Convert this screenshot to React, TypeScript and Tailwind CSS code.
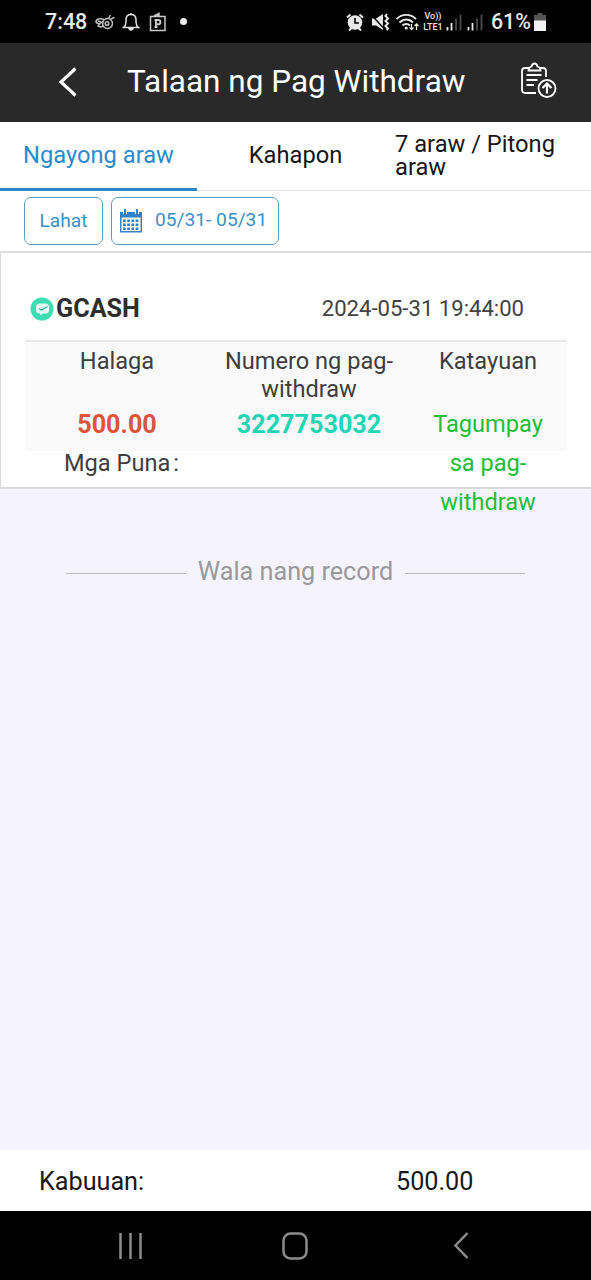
import type { ReactNode } from 'react';

interface LabelProps {
  children: ReactNode;
}

function SignalBars() {
  return (
    <svg className="h-[18px] w-[16px]" viewBox="0 0 16 18">
      <path d="M1.500 14v3.500M5.500 10v7.500" stroke="#e8e8e8" strokeWidth="1.800" />
      <path d="M10 5.500v12M14.500 1.500v16" stroke="#4b4b4b" strokeWidth="1.800" />
    </svg>
  );
}

function StatusBar() {
  return (
    <div className="flex h-[43px] items-center bg-black text-[#e8e8e8]">
      <span className="ml-[45px] w-[42px] whitespace-nowrap text-[21.500px] font-medium leading-none">7:48</span>

      {/* Notifications */}
      <svg className="ml-2 h-5 w-5" viewBox="0 0 20 20" fill="none" stroke="#bdbdbd" strokeWidth="1.500">
        <path d="M9 7.500C5 6 1 7 1 9.500c0 1.500 2 2.500 4 2l-2 2.500c2 1.500 4 1 6-.5" />
        <circle cx="12.500" cy="11.500" r="5" />
        <circle cx="12" cy="11.500" r="1.800" />
        <path d="M3 9l5.500 2M13.500 6.500L15.500 3M15.500 7l4-1.500" />
      </svg>
      <svg className="ml-[7px] h-5 w-[18px]" viewBox="0 0 18 20" fill="none" stroke="#e0e0e0" strokeWidth="1.500">
        <path d="M1.500 15.500h15c-2-1.500-2.500-3-2.500-5.500V7.500c0-3-2-5-5-5s-5 2-5 5V10c0 2.500-.5 4-2.500 5.500zM9 2.500V1" />
        <path d="M7 16.500c.5 2 3.500 2 4 0z" fill="#e0e0e0" />
      </svg>
      <svg className="ml-[9px] h-5 w-[18px]" viewBox="0 0 18 20" fill="none" stroke="#c9c9c9" strokeWidth="1.500">
        <path d="M1.500 4.500h14.500v14H1.500z" />
        <path d="M5 4l5-2.500V4z" fill="#c9c9c9" />
        <path d="M7 15.500V8h2.200c3 0 3 4.300 0 4.300H7M5.500 15h3M5.500 8H7" strokeWidth="1.900" />
      </svg>
      <span className="ml-[13px] h-[7px] w-[7px] rounded-full bg-[#eeeeee]" />

      {/* System state */}
      <svg className="ml-[159px] h-[18px] w-[18px]" viewBox="0 0 18 18">
        <circle cx="9" cy="9.500" r="7.300" fill="#e8e8e8" />
        <path d="M1 4.500L4.500 1.500M17 4.500l-3.500-3M3 17.500L5.500 15M15 17.500L12.500 15" stroke="#e8e8e8" strokeWidth="2" />
        <path d="M9 5v5h4" fill="none" stroke="#000" strokeWidth="1.600" />
      </svg>
      <svg className="ml-[7px] h-[18px] w-[19px]" viewBox="0 0 19 18" fill="#e8e8e8">
        <path d="M1 5.500h4L12 1v16l-7-4.500H1z" />
        <path d="M0 1.500l12 13" stroke="#000" strokeWidth="1.300" />
        <path d="M16 1l-1.500 2 2.500 2.500-2.500 2.500 2.500 2.500-2.500 2.500 2.500 2.500-1.500 1.500" fill="none" stroke="#e8e8e8" strokeWidth="2" />
      </svg>
      <svg className="ml-[6px] h-[18px] w-[23px]" viewBox="0 0 23 18" fill="none" stroke="#e8e8e8" strokeWidth="1.900">
        <path d="M.5 6c5.500-5.500 14-5.500 19.500 0M3.500 9.500c4-4 9.500-4 13.500 0M6.500 12.500c2-2 5.500-2 7.500 0" />
        <circle cx="10.200" cy="15" r="1.600" fill="#e8e8e8" stroke="none" />
        <path d="M15.500 11v5.500M13.500 14.500l2 2 2-2M20.500 17v-6M18.500 13l2-2 2 2" strokeWidth="1.300" />
      </svg>
      <div className="ml-[3px] flex w-[22px] flex-col items-center whitespace-nowrap text-[9px] font-medium leading-[11px]">
        <span>Vo))</span>
        <span>LTE1</span>
      </div>
      <div className="ml-[2px] flex gap-[5px]">
        <SignalBars />
        <SignalBars />
      </div>
      <span className="ml-[8px] w-[40px] whitespace-nowrap text-[21.300px] font-medium leading-none">61%</span>
      <svg className="ml-[3px] h-[18px] w-[12px]" viewBox="0 0 12 18">
        <path d="M3.500 0h5v2H12v6H0V2h3.500z" fill="#555555" />
        <path d="M0 7.500h12V18H0z" fill="#f2f2f2" />
      </svg>
    </div>
  );
}

function Header() {
  return (
    <header className="flex h-[79px] items-center bg-[#292929] text-white">
      <svg className="mb-[2px] ml-[58px] h-[30px] w-5" viewBox="0 0 20 30" fill="none" stroke="currentColor" strokeWidth="3.200">
        <path d="M17.500 1.500L3 15l14.500 13.500" />
      </svg>
      <h1 className="ml-[49px] w-[340px] whitespace-nowrap pb-px text-[31.500px] font-normal leading-none">
        Talaan ng Pag Withdraw
      </h1>
      <svg className="mb-[5px] ml-[53px] h-[36px] w-[37px]" viewBox="0 0 37 36" fill="none" stroke="currentColor" strokeWidth="1.800">
        <path d="M16 31H5a3 3 0 0 1-3-3V9a3 3 0 0 1 3-3h4M20 6h3a3 3 0 0 1 3 3v6" />
        <path d="M8.500 8.500c0-3 1-3.500 3-4 1-4 5-4 6 0 2 .5 3 1 3 4z" />
        <path d="M6.500 13h15M6.500 18h11M6.500 23h7.500" />
        <circle cx="27" cy="26.500" r="8.500" />
        <path d="M27 31.500V22M22.500 26l4.500-4.500 4.500 4.500" strokeWidth="2.200" />
      </svg>
    </header>
  );
}

function Tabs() {
  return (
    <nav className="grid h-[69px] grid-cols-3 border-b border-[#e2e2e2] bg-white text-[23.700px] leading-[23px] text-[#161616]">
      <div className="-mb-px flex items-center justify-center border-b-[3px] border-[#2c85c6] text-[#2c8ace]">
        Ngayong araw
      </div>
      <div className="flex items-center justify-center pb-[2px]">Kahapon</div>
      <div className="flex items-center pb-px pl-px">7 araw / Pitong araw</div>
    </nav>
  );
}

function CalendarIcon() {
  const rows = [10.5, 14.5, 18.5];
  const cols = [3, 7.2, 11.4, 15.6];

  return (
    <svg className="h-6 w-[22px]" viewBox="0 0 22 24">
      <path d="M0 3h22v20.500H0z" fill="#2a84d0" />
      <path d="M1.500 8.500h19V22h-19z" fill="#fff" />
      <path d="M5 0v5M17 0v5" stroke="#fff" strokeWidth="4" />
      <path d="M5 0v5M17 0v5" stroke="#2a84d0" strokeWidth="2" />
      {rows.map((y) =>
        cols.map((x) => <rect key={`${x}-${y}`} x={x} y={y} width="2.800" height="2.500" fill="#2a84d0" />)
      )}
    </svg>
  );
}

function Filters() {
  return (
    <div className="flex h-[62px] gap-2 border-b-2 border-[#dedede] bg-white pl-6 pt-[6px] text-[19.200px] text-[#3b90c6]">
      <button className="h-[48px] w-[79px] rounded-[7px] border border-[#5a9fc0]">Lahat</button>
      <button className="flex h-[48px] w-[168px] items-center whitespace-nowrap rounded-[7px] border border-[#5a9fc0] pl-2">
        <CalendarIcon />
        <span className="ml-[13px] pb-[2px]">05/31- 05/31</span>
      </button>
    </div>
  );
}

function ColumnLabel({ children }: LabelProps) {
  return <div className="h-[56px] text-[#3e3e3e]">{children}</div>;
}

function RecordCard() {
  return (
    <section className="h-[236px] border-b-2 border-l border-[#dadade] bg-white pl-6 pr-6 text-[23.600px]">
      <div className="flex h-[89px] items-center border-b-2 border-[#e9e9e9] pl-[5px] pt-[24px]">
        <svg className="h-6 w-6" viewBox="0 0 24 24">
          <circle cx="12" cy="12" r="11.500" fill="#3edcb3" />
          <path d="M6 10Q6 6.500 9.500 6.500h6Q19 6.500 19 10v3q0 3.500-3.500 3.500H14l-4 1.500v-1.500Q6 16.500 6 13z" fill="#e5fff6" />
          <path d="M9 11.500l2.500 1.500 6-3.500" fill="none" stroke="#28b995" strokeWidth="1.300" />
        </svg>
        <span className="ml-[2px] text-[25.200px] font-bold text-[#2d2d2d]">GCASH</span>
        <time className="ml-auto mr-[43px] text-[22.100px] text-[#424242]">2024-05-31 19:44:00</time>
      </div>

      <div className="grid h-[109px] grid-cols-[184px_200px_158px] bg-[#fafafa] pt-[5px] text-center leading-[28px]">
        <div>
          <ColumnLabel>Halaga</ColumnLabel>
          <strong className="block text-[25.200px] leading-[43px] text-[#e0533a]">500.00</strong>
        </div>
        <div>
          <ColumnLabel>Numero ng pag-withdraw</ColumnLabel>
          <strong className="block text-[25.200px] leading-[43px] text-[#1fd5b3]">3227753032</strong>
        </div>
        <div>
          <ColumnLabel>Katayuan</ColumnLabel>
          <div className="px-5 pt-[2px] leading-[39.200px] text-[#20bd35]">Tagumpay sa pag-withdraw</div>
        </div>
      </div>
      <div className="pl-[39px] leading-[24px] text-[#3e3e3e]">Mga Puna<span className="ml-[3px]">:</span></div>
    </section>
  );
}

function EndOfRecords() {
  return (
    <div className="mt-[67px] flex items-center justify-center text-[25.200px] leading-8 text-[#999999]">
      <span className="mt-[2px] h-px w-[120px] bg-[#bdbdbd]" />
      <span className="mx-3">Wala nang record</span>
      <span className="mt-[2px] h-px w-[120px] bg-[#bdbdbd]" />
    </div>
  );
}

function NavigationBar() {
  return (
    <div className="flex h-[69px] items-center bg-black text-[#8c8c8c]">
      <svg className="ml-[118px] h-[26px] w-[25px]" viewBox="0 0 25 26" stroke="currentColor" strokeWidth="2.500">
        <path d="M2.500 0v26M12.500 0v26M22.500 0v26" />
      </svg>
      <svg className="ml-[139px] h-[28px] w-[26px]" viewBox="0 0 26 28" fill="none" stroke="currentColor" strokeWidth="2.500">
        <rect x="1.500" y="1.500" width="23" height="25" rx="7" />
      </svg>
      <svg className="ml-[145px] h-[27px] w-[16px]" viewBox="0 0 16 27" fill="none" stroke="currentColor" strokeWidth="2.500">
        <path d="M14.500 1L2.500 13.500l12 12.500" />
      </svg>
    </div>
  );
}

export default function App() {
  return (
    <div className="flex h-[1280px] w-[591px] flex-col overflow-hidden bg-[#f5f4fe] font-['Roboto','Liberation_Sans',sans-serif]">
      <StatusBar />
      <Header />
      <Tabs />
      <Filters />
      <RecordCard />
      <EndOfRecords />
      <footer className="mt-auto flex h-[62px] items-center border-t border-[#f7f7f7] bg-white pl-[39px] pt-[2px] text-[25.200px] text-[#181818]">
        <span className="w-[357px]">Kabuuan:</span>
        <span>500.00</span>
      </footer>
      <NavigationBar />
    </div>
  );
}
